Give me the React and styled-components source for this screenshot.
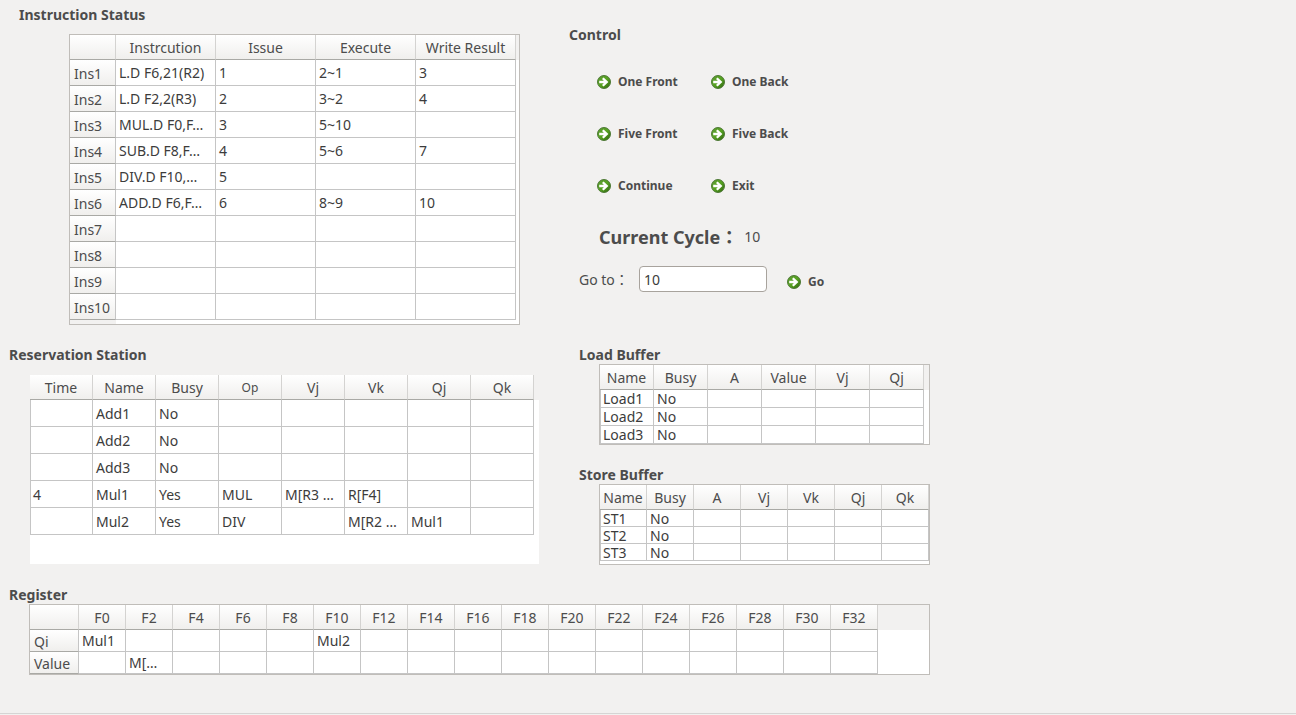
import React from "react";
import styled, { createGlobalStyle } from "styled-components";

const GlobalStyle = createGlobalStyle`
  * { box-sizing: border-box; }
  body {
    margin: 0;
    background: #f2f1f0;
    color: #4c4c4c;
    font: 14px/20px "Noto Sans", "Noto Sans CJK TC", sans-serif;
  }
`;

const Page = styled.main`
  display: flex;
  flex-direction: column;
  gap: 20px;
  min-height: calc(100vh - 1px);
  padding: 5px 9px 38px;
  border-bottom: 1px solid #d6d5d4;
`;

const Columns = styled.div`
  display: grid;
  grid-template-columns: minmax(0, 560px) minmax(0, 1fr);
`;

const Stack = styled.div`
  display: flex;
  flex-direction: column;
  gap: 20px;
  padding-left: 10px;
`;

const Panel = styled.section`
  padding-left: ${(p) => p.$indent || 0}px;
  padding-top: ${(p) => p.$top || 0}px;
`;

const Title = styled.h2`
  margin: 0;
  padding-top: 1px;
  font-size: 14px;
  line-height: 18px;
  font-weight: 700;
`;

const Frame = styled.div`
  width: max-content;
  margin: ${(p) => p.$gap || 0}px 0 0 ${(p) => p.$left || 20}px;
  padding: 0 ${(p) => p.$right || 0}px ${(p) => p.$bottom || 0}px 0;
  border: ${(p) => (p.$plain ? "none" : "1px solid #c0bdb9")};
  background:
    linear-gradient(#f2f1f0, #f2f1f0) 0 0 / ${(p) => p.$head || 0}px 100% no-repeat,
    linear-gradient(#f2f1f0 0 25px, #fff 25px);
`;

const Grid = styled.table`
  table-layout: fixed;
  width: ${(p) => p.$width}px;
  border-collapse: separate;
  border-spacing: 0;
  color: #3c3c3c;

  th, td {
    padding: 0 0 0 3px;
    white-space: nowrap;
    text-align: left;
    font-weight: 400;
    line-height: 15px;
    border: 0 solid #c5c5c5;
    border-right-width: 1px;
    border-bottom-width: 1px;
  }
  td {
    height: ${(p) => p.$row}px;
    padding-top: ${(p) => (p.$row % 2 ? 1 : 0)}px;
    background: #fff;
  }
  tbody td:first-child { border-left-width: 1px; padding-left: 2px; }
`;

const ColHead = styled.th`
  && {
    height: 25px;
    padding: 1px 0 0;
    text-align: center;
    color: #4c4c4c;
    font-size: ${(p) => (p.$small ? 12 : 14)}px;
    background: linear-gradient(#fff, #f0efed);
    border-bottom-color: #a9a9a5;
    border-right-color: #d4d3d1;
  }
`;

const RowHead = styled.th`
  && {
    padding: 2px 0 0 4px;
    color: #4c4c4c;
    background: linear-gradient(#fff, #f0efed);
    border-bottom-color: #a9a9a5;
  }
`;

function DataTable({ label, cols, rows, colWidth, headWidth = 0, rowHeight, rowHeads, ...frame }) {
  return (
    <Frame $head={headWidth} {...frame}>
      <Grid aria-label={label} $width={headWidth + colWidth * cols.length} $row={rowHeight}>
        <colgroup>
          {rowHeads && <col width={headWidth} />}
          {cols.map((c) => <col key={c} width={colWidth} />)}
        </colgroup>
        <thead>
          <tr>
            {rowHeads && <ColHead as="td" />}
            {cols.map((c) => <ColHead key={c} scope="col" $small={c === "Op"}>{c}</ColHead>)}
          </tr>
        </thead>
        <tbody>
          {rows.map((r, i) => (
            <tr key={i}>
              {rowHeads && <RowHead scope="row">{rowHeads[i]}</RowHead>}
              {cols.map((c, j) => <td key={c}>{r[j]}</td>)}
            </tr>
          ))}
        </tbody>
      </Grid>
    </Frame>
  );
}

const Buttons = styled.div`
  display: grid;
  grid-template-columns: 114px 114px;
  grid-auto-rows: 26px;
  row-gap: 26px;
  margin: 25px 0 0 28px;
`;

const Action = styled.button`
  display: flex;
  align-items: center;
  gap: 7px;
  padding: 0;
  border: 0;
  background: none;
  color: #4c4c4c;
  font: inherit;
  font-size: 12px;
  font-weight: 700;
  white-space: nowrap;
`;

const Cycle = styled.div`
  display: flex;
  align-items: center;
  gap: 6px;
  margin: 24px 0 0 30px;
  line-height: 28px;
  strong { font-size: 18px; }
`;

const GoForm = styled.form`
  display: flex;
  align-items: flex-end;
  margin: 15px 0 0 10px;
`;

const GoLabel = styled.label`
  width: 60px;
  line-height: 24px;
  white-space: nowrap;
`;

const GoInput = styled.input`
  width: 128px;
  height: 26px;
  margin-right: 20px;
  padding: 0 4px;
  border: 1px solid #a8a39d;
  border-radius: 4px;
  background: #fff;
  color: #3c3c3c;
  font: inherit;
`;

function ArrowIcon() {
  return (
    <svg width="14" height="14" viewBox="0 0 14 14" aria-hidden="true">
      <defs>
        <linearGradient id="orb" x1="0" y1="0" x2="1" y2="1">
          <stop offset="0" stopColor="#5f9b35" />
          <stop offset=".5" stopColor="#57a322" />
          <stop offset="1" stopColor="#2f6410" />
        </linearGradient>
      </defs>
      <circle cx="7" cy="7" r="6.5" fill="url(#orb)" stroke="#44702b" strokeWidth=".9" />
      <path d="M2.2 5.8H6.8L5 3.9L6.6 2.5L11.4 7L6.6 11.5L5 10.1L6.8 8.2H2.2Z" fill="#fff" />
    </svg>
  );
}

function ActionButton({ children, ...rest }) {
  return <Action type="button" {...rest}><ArrowIcon />{children}</Action>;
}

const actions = ["One Front", "One Back", "Five Front", "Five Back", "Continue", "Exit"];
const instructions = [
  ["L.D F6,21(R2)", "1", "2~1", "3"],
  ["L.D F2,2(R3)", "2", "3~2", "4"],
  ["MUL.D F0,F…", "3", "5~10"],
  ["SUB.D F8,F…", "4", "5~6", "7"],
  ["DIV.D F10,…", "5"],
  ["ADD.D F6,F…", "6", "8~9", "10"],
  [], [], [], [],
];
const stations = [
  ["", "Add1", "No"],
  ["", "Add2", "No"],
  ["", "Add3", "No"],
  ["4", "Mul1", "Yes", "MUL", "M[R3 …", "R[F4]"],
  ["", "Mul2", "Yes", "DIV", "", "M[R2 …", "Mul1"],
];
const registers = Array.from({ length: 17 }, (_, i) => `F${i * 2}`);

export default function App() {
  return (
    <>
      <GlobalStyle />
      <Page>
        <Columns>
          <Panel>
            <Panel $indent={10}><Title>Instruction Status</Title></Panel>
            <DataTable label="Instruction Status" cols={["Instrcution", "Issue", "Execute", "Write Result"]}
              rows={instructions} rowHeads={instructions.map((_, i) => `Ins${i + 1}`)}
              headWidth={46} colWidth={100} rowHeight={26} $gap={10} $left={60} $right={3} $bottom={4} />
          </Panel>
          <Panel $top={20}>
            <Title>Control</Title>
            <Buttons>{actions.map((a) => <ActionButton key={a}>{a}</ActionButton>)}</Buttons>
            <Cycle><strong>Current Cycle：</strong><span>10</span></Cycle>
            <GoForm onSubmit={(e) => e.preventDefault()}>
              <GoLabel htmlFor="goto">Go to：</GoLabel>
              <GoInput id="goto" defaultValue="10" />
              <ActionButton type="submit">Go</ActionButton>
            </GoForm>
          </Panel>
        </Columns>
        <Columns>
          <Panel>
            <Title>Reservation Station</Title>
            <DataTable label="Reservation Station" cols={["Time", "Name", "Busy", "Op", "Vj", "Vk", "Qj", "Qk"]}
              rows={stations} colWidth={63} rowHeight={27} $plain $gap={11} $left={21} $right={5} $bottom={29} />
          </Panel>
          <Stack>
            <Panel>
              <Title>Load Buffer</Title>
              <DataTable label="Load Buffer" cols={["Name", "Busy", "A", "Value", "Vj", "Qj"]}
                rows={[["Load1", "No"], ["Load2", "No"], ["Load3", "No"]]}
                colWidth={54} rowHeight={18} $right={5} />
            </Panel>
            <Panel>
              <Title>Store Buffer</Title>
              <DataTable label="Store Buffer" cols={["Name", "Busy", "A", "Vj", "Vk", "Qj", "Qk"]}
                rows={[["ST1", "No"], ["ST2", "No"], ["ST3", "No"]]}
                colWidth={47} rowHeight={17} $bottom={3} />
            </Panel>
          </Stack>
        </Columns>
        <Panel>
          <Title>Register</Title>
          <DataTable label="Register" cols={registers} rowHeads={["Qi", "Value"]}
            rows={[["Mul1", "", "", "", "", "Mul2"], ["", "M[…"]]}
            headWidth={49} colWidth={47} rowHeight={22} $right={51} />
        </Panel>
      </Page>
    </>
  );
}
